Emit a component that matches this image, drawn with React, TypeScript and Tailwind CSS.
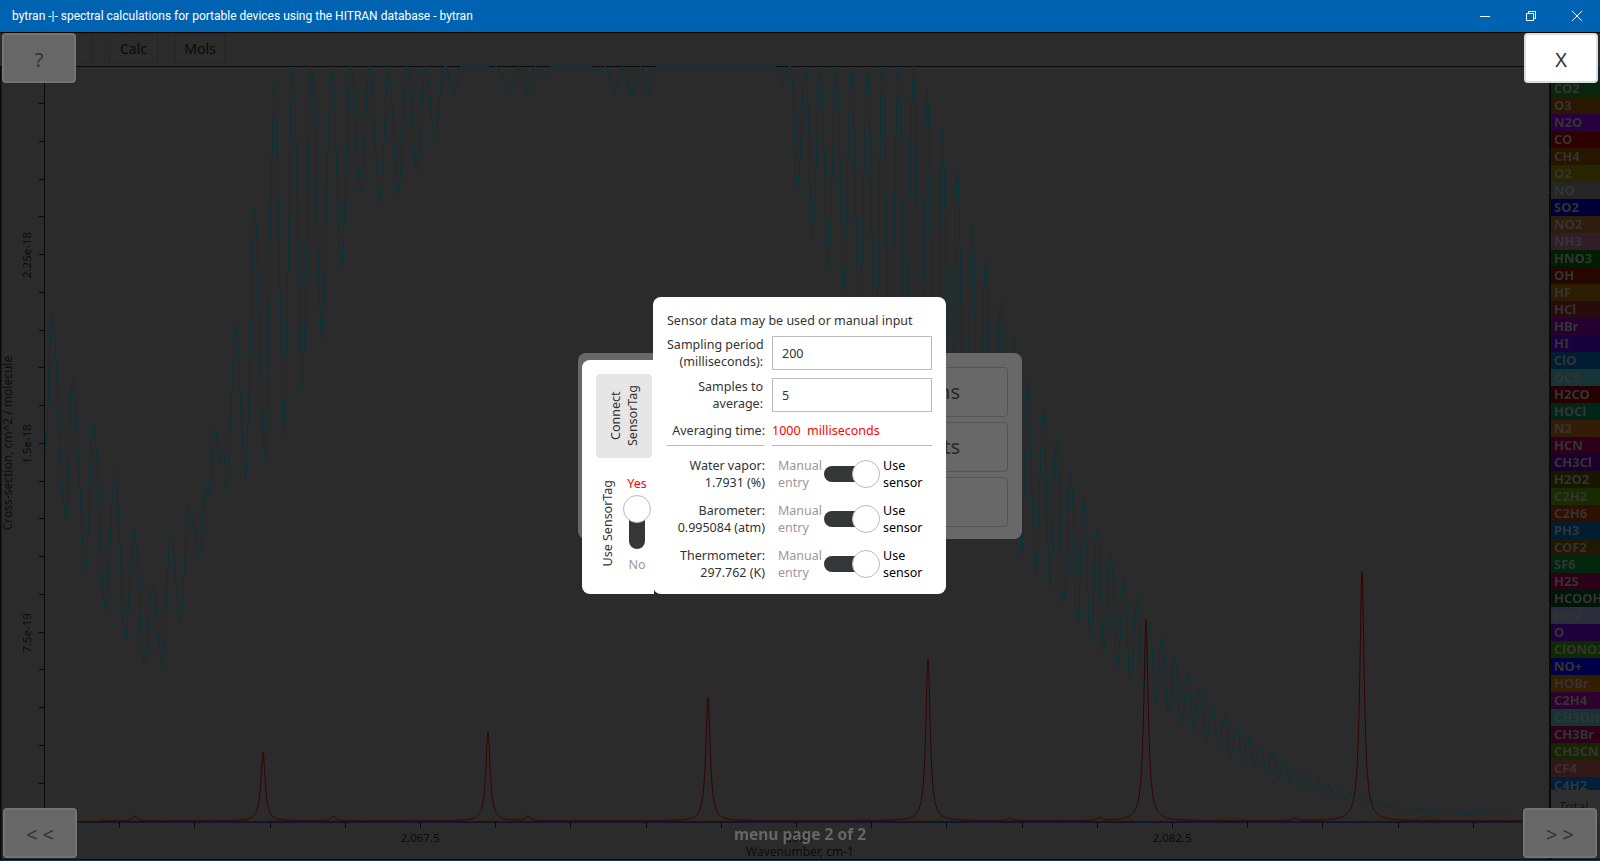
import React from "react";

const FONT = "font-['Noto_Sans','Open_Sans',sans-serif]";

const MOLECULES: [string, string][] = [
  ["H2O", "#102a3a"], ["CO2", "#0a2a0c"], ["O3", "#2e1a00"], ["N2O", "#2c0044"], ["CO", "#330000"],
  ["CH4", "#2c1700"], ["O2", "#2c2a00"], ["NO", "#2a2a2a"], ["SO2", "#00003c"], ["NO2", "#33200e"],
  ["NH3", "#38212a"], ["HNO3", "#002200"], ["OH", "#2a0800"], ["HF", "#302000"], ["HCl", "#2c0d0d"],
  ["HBr", "#2a0033"], ["HI", "#1b0044"], ["ClO", "#002038"], ["OCS", "#1a3a3d"], ["H2CO", "#2a0000"],
  ["HOCl", "#002a1a"], ["N2", "#3a2008"], ["HCN", "#33001a"], ["CH3Cl", "#1e0033"], ["H2O2", "#1a1a00"],
  ["C2H2", "#1c3000"], ["C2H6", "#331100"], ["PH3", "#002038"], ["COF2", "#261a00"], ["SF6", "#002a10"],
  ["H2S", "#33001a"], ["HCOOH", "#001a08"], ["HO2", "#2e3340"], ["O", "#220044"], ["ClONO2", "#103000"],
  ["NO+", "#000050"], ["HOBr", "#3a2000"], ["C2H4", "#330033"], ["CH3OH", "#1a3a3a"], ["CH3Br", "#33001a"],
  ["CH3CN", "#1a2a00"], ["CF4", "#3a1a1a"], ["C4H2", "#002244"],
];

// extrema of the cross-section curve, alternating max/min
const WAVE: [number, number][] = [
  [45, 450], [51, 314], [65, 521], [72, 377], [85, 574], [93, 421], [105, 613], [114, 466], [125, 641],
  [133, 527], [144, 666], [152, 583], [162, 668], [170, 533], [180, 625], [188, 503], [199, 555], [205, 487],
  [209, 496], [214, 428], [220, 463], [223, 453], [226, 490], [235, 323], [245, 480], [254, 205], [264, 460],
  [274, 78], [283, 437], [292, 60], [302, 390], [311, 60], [321, 340], [331, 60], [341, 270], [350, 60],
  [360, 193], [369, 60], [379, 203], [388, 60], [397, 197], [407, 60], [416, 173], [425, 60], [434, 140],
  [444, 60], [453, 95], [460, 66], [486, 66], [491, 68], [496, 66], [509, 90], [518, 66], [527, 93], [535, 66],
  [543, 82], [550, 66], [590, 66], [597, 71], [605, 66], [614, 92], [622, 66], [631, 95], [640, 66], [648, 93],
  [656, 66], [775, 66], [782, 85], [790, 60], [797, 190], [805, 60], [812, 242], [820, 60], [828, 267],
  [836, 60], [843, 293], [851, 60], [859, 330], [867, 60], [875, 360], [882, 60], [890, 380], [898, 60],
  [905, 400], [913, 60], [920, 420], [927, 89], [935, 440], [942, 127], [950, 470], [957, 168], [964, 490],
  [972, 222], [978, 505], [985, 257], [992, 520], [1000, 300], [1006, 535], [1014, 335], [1021, 556],
  [1027, 378], [1035, 572], [1043, 408], [1049, 588], [1056, 438], [1063, 605], [1070, 470], [1077, 623],
  [1083, 497], [1090, 639], [1097, 525], [1103, 653], [1110, 550], [1117, 668], [1123, 577], [1130, 682],
  [1136, 595], [1143, 692], [1149, 617], [1155, 704], [1161, 636], [1168, 713], [1174, 656], [1181, 724],
  [1187, 671], [1193, 732], [1199, 687], [1206, 739], [1212, 702], [1218, 748], [1224, 714], [1230, 755],
  [1236, 726], [1242, 762], [1248, 736], [1254, 767], [1260, 744], [1266, 773], [1272, 752], [1278, 778],
  [1283, 761], [1289, 783], [1294, 767], [1300, 787], [1305, 774], [1312, 791], [1317, 778], [1322, 793],
  [1328, 784], [1333, 796], [1338, 788], [1345, 799], [1349, 792], [1355, 802], [1360, 795], [1365, 804],
  [1370, 799], [1376, 806], [1381, 802], [1387, 808], [1392, 803], [1397, 809], [1402, 807], [1410, 811],
  [1418, 808], [1426, 812], [1434, 810], [1444, 813], [1454, 811], [1466, 814], [1478, 812], [1490, 815],
  [1502, 813], [1522, 816],
];

const PEAKS: [number, number][] = [[263, 752], [488, 732], [708, 698], [928, 660], [1146, 619], [1362, 571]];
const SMALL_PEAKS: [number, number][] = [[135, 816], [333, 816], [528, 816], [1010, 818], [1100, 818], [1295, 818]];

function wavePoints() {
  const out: string[] = [];
  for (let i = 0; i < WAVE.length - 1; i++) {
    const [x0, y0] = WAVE[i];
    const [x1, y1] = WAVE[i + 1];
    const steps = 4;
    for (let s = 0; s < steps; s++) {
      const t = s / steps;
      const y = y0 + ((y1 - y0) * (1 - Math.cos(Math.PI * t))) / 2;
      const px = Math.round(x0 + (x1 - x0) * t) + 0.5;
      out.push(`${px},${Math.max(66.5, Math.round(y) + 0.5)}`);
    }
  }
  return out.join(" ");
}

function redPoints() {
  const out: string[] = [];
  for (let x = 100; x <= 1522; x += 0.5) {
    let h = 0;
    for (const [px, top] of PEAKS) h += (821 - top) / (1 + ((x - px) / 2.6) ** 2);
    for (const [px, top] of SMALL_PEAKS) h += (821 - top) / (1 + ((x - px) / 2.5) ** 2);
    out.push(`${x},${(821 - h).toFixed(1)}`);
  }
  return out.join(" ");
}

function orangePoints() {
  const out: string[] = [];
  for (let x = 80; x <= 1522; x += 2) {
    const grow = x > 600 ? Math.min(1, (x - 600) / 500) : 0.2;
    const ripple = Math.max(0, Math.sin(x / 9) * Math.sin(x / 31) * Math.cos(x / 73)) * 6 * grow;
    out.push(`${x},${(820.5 - ripple).toFixed(1)}`);
  }
  return out.join(" ");
}

function Plot() {
  const xTicks = Array.from({ length: 20 }, (_, i) => 44 + 75.2 * i);
  const yTicks = Array.from({ length: 20 }, (_, i) => 103 + 37.75 * i);
  return (
    <svg viewBox="0 66 1549 793" width={1549} height={793} className="block shrink-0">
      <rect x="0" y="66" width="1.5" height="793" fill="#0a0a0a" />
      <line x1="0" y1="66.5" x2="1549" y2="66.5" stroke="#0a0a0a" />
      <line x1="44.5" y1="66" x2="44.5" y2="822" stroke="#0a0a0a" />
      {yTicks.map((y) => (
        <line key={y} x1="39" y1={Math.round(y) + 0.5} x2="44" y2={Math.round(y) + 0.5} stroke="#0a0a0a" />
      ))}
      {xTicks.map((x) => (
        <line key={x} x1={Math.round(x) + 0.5} y1="822" x2={Math.round(x) + 0.5} y2="828" stroke="#0a0a0a" />
      ))}
      <polyline points={wavePoints()} fill="none" stroke="#0a3238" shapeRendering="crispEdges" />
      <polyline points={orangePoints()} fill="none" stroke="#3a2508" />
      <polyline points={redPoints()} fill="none" stroke="#380202" />
      <line x1="44" y1="822" x2="1522" y2="822" stroke="#06103c" strokeWidth="1.6" />
      <g fill="#0c0c0c" fontFamily="'Noto Sans', sans-serif" fontSize="11.5">
        <text x="420" y="842" textAnchor="middle">2,067.5</text>
        <text x="797" y="842" textAnchor="middle">2,075</text>
        <text x="1172" y="842" textAnchor="middle">2,082.5</text>
        <text x="800" y="855.5" textAnchor="middle" fontSize="12">Wavenumber, cm-1</text>
        <text transform="translate(31 255) rotate(-90)" textAnchor="middle">2.25e-18</text>
        <text transform="translate(31 444) rotate(-90)" textAnchor="middle">1.5e-18</text>
        <text transform="translate(31 633) rotate(-90)" textAnchor="middle">7.5e-19</text>
        <text transform="translate(12 443) rotate(-90)" textAnchor="middle" fontSize="12">
          Cross-section,  cm^2 / molecule
        </text>
      </g>
    </svg>
  );
}

function Legend() {
  return (
    <div className="flex flex-col w-[51px] shrink-0 border-l-2 border-[#0a0a0a] h-[793px] brightness-90">
      <div className="h-[724px] overflow-hidden shrink-0">
        <div className="-mt-[3px] flex flex-col">
          {MOLECULES.map(([name, color]) => (
            <div
              key={name}
              className="h-[17px] shrink-0 pl-[3px] text-[13px] leading-[17px] font-bold text-[#3a3a3a] whitespace-nowrap overflow-hidden"
              style={{ backgroundColor: color }}
            >
              {name}
            </div>
          ))}
        </div>
      </div>
      <div className="h-[32px] bg-[#343434] pl-2 pt-2 text-[13px] leading-[17px] text-[#141414]">Total</div>
    </div>
  );
}

function MenuButton({ label, className }: { label: string; className: string }) {
  return (
    <div
      className={`h-[30px] pt-px flex items-center justify-center border border-[#262626] bg-[#2c2c2c] text-sm text-[#0a0a0a] ${className}`}
    >
      {label}
    </div>
  );
}

function CornerButton({ label, className }: { label: string; className: string }) {
  return (
    <div
      className={`absolute flex items-center justify-center w-[74px] h-[50px] pt-[3px] border-2 rounded-sm text-xl text-[#333] ${className}`}
    >
      {label}
    </div>
  );
}

function SensorRow({ name, value }: { name: string; value: string }) {
  return (
    <div className="flex items-center h-[34px]">
      <div className="w-[98px] text-right text-[#333] whitespace-nowrap">
        <div>{name}</div>
        <div>{value}</div>
      </div>
      <div className="w-[46px] ml-[13px] text-[#999]">
        <div>Manual</div>
        <div>entry</div>
      </div>
      <div className="relative w-[56px] h-7 flex items-center">
        <div className="w-[42px] h-4 rounded-full bg-[#343638]" />
        <div className="absolute right-0 top-0 w-7 h-7 rounded-full bg-white border border-[#bbb]" />
      </div>
      <div className="ml-[3px] text-black">
        <div>Use</div>
        <div>sensor</div>
      </div>
    </div>
  );
}

function SensorDialog() {
  return (
    <>
      {/* grey menu behind the dialog */}
      <div className="absolute left-[578px] top-[353px] w-[444px] h-[186px] rounded-lg bg-[#686868] pt-[14px] pl-[14px] pr-[14px] flex flex-col gap-[5px]">
        {["Conditions", "Results", ""].map((t, i) => (
          <div
            key={i}
            className="h-[50px] rounded-sm border border-[#555] flex items-center justify-end pr-[47px] text-xl text-[#2a2a2a]"
          >
            {t}
          </div>
        ))}
      </div>

      {/* left strip */}
      <div className="absolute left-[582px] top-[360px] w-[72px] h-[234px] rounded-l-lg bg-white text-[12.5px] leading-[17px]">
        <div className="ml-[14px] mt-[14px] w-[56px] h-[84px] rounded-sm bg-[#e6e6e6] flex items-center justify-center">
          <div className="[writing-mode:vertical-rl] rotate-180 text-center text-[#333]">
            Connect
            <br />
            SensorTag
          </div>
        </div>
        <div className="flex mt-[20px] ml-[15px]">
          <div className="w-5 h-[90px] flex items-center justify-center">
            <div className="[writing-mode:vertical-rl] rotate-180 text-[#333] whitespace-nowrap">Use SensorTag</div>
          </div>
          <div className="ml-[6px] w-[28px] flex flex-col items-center -mt-[3px]">
            <div className="text-[#f00]">Yes</div>
            <div className="relative w-7 h-[56px] mt-[3px] flex justify-center">
              <div className="absolute top-[12px] w-4 h-[42px] rounded-full bg-[#343638]" />
              <div className="absolute top-0 w-7 h-7 rounded-full bg-white border border-[#bbb]" />
            </div>
            <div className="text-[#999] mt-[5px]">No</div>
          </div>
        </div>
      </div>

      {/* main card */}
      <div className="absolute left-[653px] top-[297px] w-[293px] h-[297px] rounded-lg bg-white pl-[14px] pt-[15px] text-[12.5px] leading-[17px]">
        <div className="text-[#333] whitespace-nowrap">Sensor data may be used or manual input</div>
        <div className="flex items-center mt-[7px]">
          <div className="w-[96px] text-right text-[#333] whitespace-nowrap">
            Sampling period
            <br />
            (milliseconds):
          </div>
          <input
            readOnly
            value="200"
            className="ml-[9px] w-[160px] h-[34px] border border-[#bbb] px-[9px] text-[#333] outline-none"
          />
        </div>
        <div className="flex items-center mt-[8px]">
          <div className="w-[96px] text-right text-[#333]">
            Samples to
            <br />
            average:
          </div>
          <input
            readOnly
            value="5"
            className="ml-[9px] w-[160px] h-[34px] border border-[#bbb] px-[9px] text-[#333] outline-none"
          />
        </div>
        <div className="flex mt-[10px]">
          <div className="w-[98px] text-right text-[#333] whitespace-nowrap">Averaging time:</div>
          <div className="ml-[7px] text-[#f00] whitespace-pre">1000  milliseconds</div>
        </div>
        <div className="flex mt-[6px]">
          <div className="w-[97px] h-px bg-[#bbb]" />
          <div className="ml-[8px] w-[160px] h-px bg-[#bbb]" />
        </div>
        <div className="flex flex-col gap-[11px] mt-[11px]">
          <SensorRow name="Water vapor:" value="1.7931 (%)" />
          <SensorRow name="Barometer:" value="0.995084 (atm)" />
          <SensorRow name="Thermometer:" value="297.762 (K)" />
        </div>
      </div>
    </>
  );
}

export default function App() {
  return (
    <div className={`relative w-[1600px] h-[861px] overflow-hidden flex flex-col bg-[#2b2b2b] ${FONT}`}>
      {/* TITLE BAR */}
      <div className="h-[33px] shrink-0 flex items-center justify-between bg-[#0063b1] border-b border-black text-white">
        <div className="pl-3 text-xs font-['Roboto',sans-serif] whitespace-nowrap">
          bytran -|- spectral calculations for portable devices using the HITRAN database - bytran
        </div>
        <svg width="120" height="32" viewBox="1480 0 120 32" fill="none" stroke="white" strokeWidth="1">
          <path d="M1480 16.5h10" />
          <path d="M1526.5 13.5h7v7h-7zM1528.5 13.5v-2h7v7h-2" />
          <path d="M1572 11l10 10M1582 11l-10 10" />
        </svg>
      </div>

      {/* MENU ROW */}
      <div className="h-[33px] shrink-0 flex pl-[18px] gap-[17px]">
        <MenuButton label="Menu" className="w-[74px]" />
        <MenuButton label="Calc" className="w-[49px]" />
        <MenuButton label="Mols" className="w-[50px]" />
      </div>

      {/* PLOT + LEGEND */}
      <div className="flex">
        <Plot />
        <Legend />
      </div>

      <div className="h-px bg-[#0a0a0a]" />
      <div className="h-px bg-[#0c3a5e]" />

      {/* MODAL LAYER */}
      <CornerButton label="?" className="left-[2px] top-[33px] bg-[#676767] border-[#747474]" />
      <CornerButton label="X" className="left-[1524px] top-[33px] bg-white border-[#ddd]" />
      <CornerButton label="< <" className="left-[3px] top-[808px] bg-[#676767] border-[#747474]" />
      <CornerButton label="> >" className="left-[1523px] top-[808px] bg-[#676767] border-[#747474]" />
      <div className="absolute left-0 right-0 top-[824px] text-center text-[15.5px] leading-5 font-bold text-[#666]">
        menu page 2 of 2
      </div>
      <SensorDialog />
    </div>
  );
}
